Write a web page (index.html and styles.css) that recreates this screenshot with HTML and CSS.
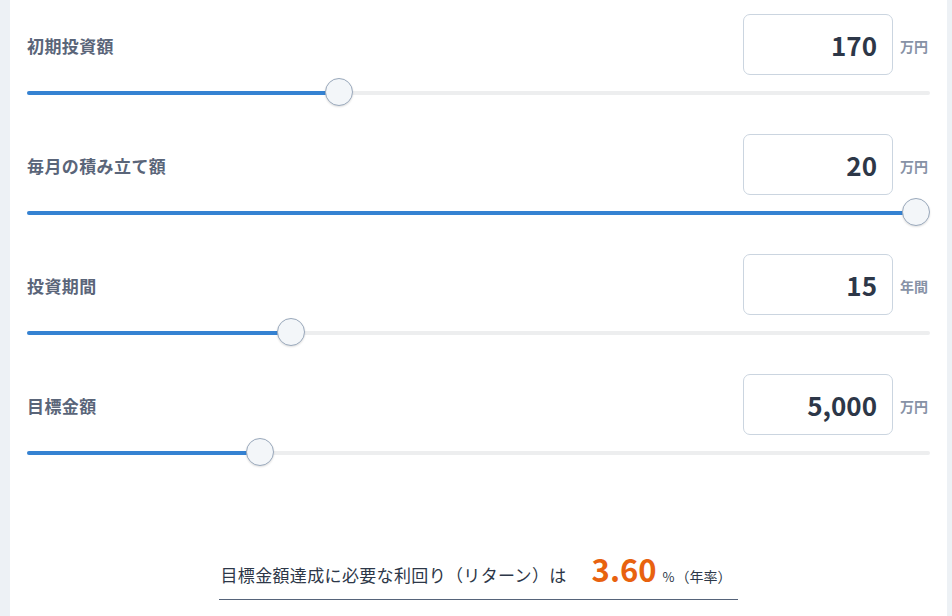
FILE: index.html
```html
<!DOCTYPE html>
<html lang="ja">
<head>
<meta charset="utf-8">
<link rel="stylesheet" href="styles.css">
</head>
<body>
<div class="card">
  <div class="row">
    <div class="head">
      <div class="label">初期投資額</div>
      <div class="field"><div class="box">170</div><span class="unit">万円</span></div>
    </div>
    <div class="slider" style="--p:0.34"><div class="fill"></div><div class="thumb"></div></div>
  </div>
  <div class="row">
    <div class="head">
      <div class="label">毎月の積み立て額</div>
      <div class="field"><div class="box">20</div><span class="unit">万円</span></div>
    </div>
    <div class="slider" style="--p:1"><div class="fill"></div><div class="thumb"></div></div>
  </div>
  <div class="row">
    <div class="head">
      <div class="label">投資期間</div>
      <div class="field"><div class="box">15</div><span class="unit">年間</span></div>
    </div>
    <div class="slider" style="--p:0.2857"><div class="fill"></div><div class="thumb"></div></div>
  </div>
  <div class="row">
    <div class="head">
      <div class="label">目標金額</div>
      <div class="field"><div class="box">5,000</div><span class="unit">万円</span></div>
    </div>
    <div class="slider" style="--p:0.25"><div class="fill"></div><div class="thumb"></div></div>
  </div>
  <div class="result-wrap">
    <div class="result">
      <span class="result-text">目標金額達成に必要な利回り（リターン）は</span>
      <span class="rate">3.60</span>
      <span class="pct">%</span>
      <span class="annual">（年率）</span>
    </div>
  </div>
</div>
</body>
</html>
```
FILE: styles.css
```css
* { box-sizing: border-box; }
html, body {
  margin: 0;
  padding: 0;
  background: #edf1f5;
  height: 616px;
  overflow: hidden;
}
body {
  font-family: "Noto Sans CJK JP", "Noto Sans", sans-serif;
}
.card {
  margin: 0 5px 0 10px;
  background: #ffffff;
  padding: 14px 17px 0 17px;
  height: 616px;
}
.row {
  height: 120px;
}
.head {
  display: flex;
  justify-content: space-between;
  align-items: center;
  height: 61px;
}
.label {
  font-size: 17px;
  font-weight: 700;
  color: #5a6579;
  letter-spacing: 0.4px;
  padding-top: 2px;
}
.field {
  display: flex;
  align-items: center;
  gap: 7px;
}
.box {
  width: 150px;
  height: 61px;
  border: 1px solid #cbd5e0;
  border-radius: 7px;
  text-align: right;
  padding-right: 15px;
  font-size: 26px;
  font-weight: 700;
  color: #2d3748;
  line-height: 59px;
}
.unit {
  font-size: 14px;
  font-weight: 700;
  color: #8792a6;
  width: 30px;
  margin-top: 2px;
}
.slider {
  position: relative;
  margin-top: 4px;
  height: 28px;
}
.slider::before {
  content: "";
  position: absolute;
  left: 0;
  right: 0;
  top: 12px;
  height: 4px;
  border-radius: 2px;
  background: #edeeef;
}
.fill {
  position: absolute;
  left: 0;
  top: 12px;
  height: 4px;
  border-radius: 2px;
  background: #3582d2;
  width: calc(14px + (100% - 28px) * var(--p));
}
.thumb {
  position: absolute;
  top: -1px;
  left: calc((100% - 28px) * var(--p));
  width: 28px;
  height: 28px;
  border-radius: 50%;
  background: #f3f6f9;
  border: 1px solid #9aa9bc;
  box-shadow: 0 1px 2px rgba(0,0,0,0.12);
}
.result-wrap {
  display: flex;
  justify-content: center;
  margin-top: 53px;
}
.result {
  display: flex;
  align-items: baseline;
  border-bottom: 1px solid #56647a;
  padding: 0 6px 8px 1px;
  color: #2d3748;
}
.result-text {
  font-size: 17px;
  letter-spacing: 0.35px;
}
.rate {
  font-size: 31px;
  font-weight: 700;
  color: #e8620f;
  margin-left: 25px;
  line-height: 44px;
}
.pct {
  font-size: 13px;
  margin-left: 6px;
}
.annual {
  font-size: 14px;
  margin-left: 1px;
}
```
